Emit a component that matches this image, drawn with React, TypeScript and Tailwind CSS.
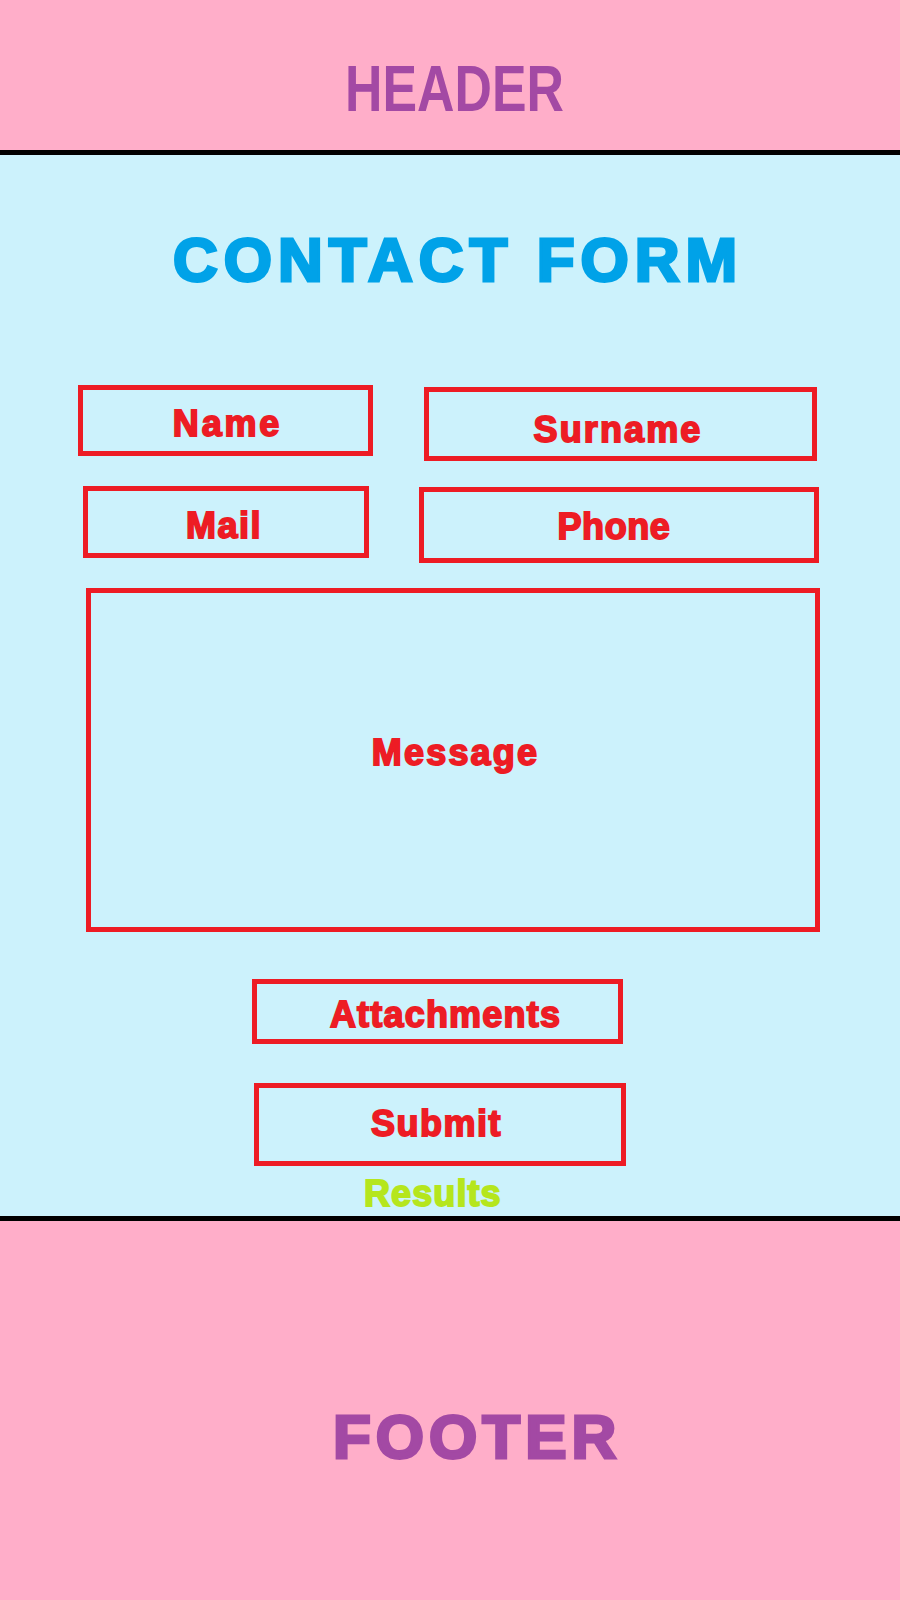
const boxBase =
  'flex items-center justify-center border-[5px] border-[#ed1c24] shrink-0'
const labelBase =
  "font-['Liberation_Sans',Arial,sans-serif] font-bold text-[36px] leading-none text-[#ed1c24] [-webkit-text-stroke:1.8px_#ed1c24] whitespace-nowrap"

function Field({
  label,
  boxClass,
  textClass,
}: {
  label: string
  boxClass: string
  textClass: string
}) {
  return (
    <div className={`${boxBase} ${boxClass}`}>
      <span className={`${labelBase} ${textClass}`}>{label}</span>
    </div>
  )
}

export default function App() {
  return (
    <div className="w-[900px] min-h-[1600px] flex flex-col font-['Liberation_Sans',Arial,sans-serif]">
      {/* header */}
      <header className="h-[155px] bg-[#ffaec9] border-b-[5px] border-black pt-[57px] pl-[345px]">
        <span className="inline-block origin-left scale-x-[0.81] text-[64px] leading-none font-bold text-[#a349a4]">
          HEADER
        </span>
      </header>

      {/* form */}
      <main className="h-[1066px] bg-[#ccf2fc] border-b-[5px] border-black pt-[74px] flex flex-col">
        <h1 className="pl-[173px] text-[62px] leading-none font-bold tracking-[6px] text-[#00a2e8] [-webkit-text-stroke:3px_#00a2e8] whitespace-nowrap">
          CONTACT FORM
        </h1>

        <div className="flex items-start mt-[94px]">
          <Field
            label="Name"
            boxClass="ml-[78px] w-[295px] h-[71px] pt-[6px] pl-[4px]"
            textClass="tracking-[2.8px]"
          />
          <Field
            label="Surname"
            boxClass="ml-[51px] mt-[2px] w-[393px] h-[74px] pt-[11px] pr-[5px]"
            textClass="tracking-[2.1px]"
          />
        </div>

        <div className="flex items-start mt-[25px]">
          <Field
            label="Mail"
            boxClass="ml-[83px] w-[286px] h-[72px] pt-[7px] pr-[4px]"
            textClass="tracking-[1.5px]"
          />
          <Field
            label="Phone"
            boxClass="ml-[50px] mt-[1px] w-[400px] h-[76px] pt-[4px] pr-[10px]"
            textClass="tracking-[0.6px]"
          />
        </div>

        <Field
          label="Message"
          boxClass="mt-[25px] ml-[86px] w-[734px] h-[344px] pb-[14px] pl-[5px]"
          textClass="tracking-[2.2px]"
        />

        <Field
          label="Attachments"
          boxClass="mt-[47px] ml-[252px] w-[371px] h-[65px] pt-[7px] pl-[16px]"
          textClass="tracking-[1.2px]"
        />

        <Field
          label="Submit"
          boxClass="mt-[39px] ml-[254px] w-[372px] h-[83px] pb-[2px] pr-[7px]"
          textClass="tracking-[1.5px]"
        />

        <p className="mt-[10px] ml-[364px] text-[36px] leading-none font-bold tracking-[1.1px] text-[#b5e61d] [-webkit-text-stroke:1.8px_#b5e61d]">
          Results
        </p>
      </main>

      {/* footer */}
      <footer className="h-[379px] bg-[#ffaec9] pt-[185px] pl-[333px]">
        <span className="text-[62px] leading-none font-bold tracking-[5px] text-[#a349a4] [-webkit-text-stroke:3px_#a349a4] whitespace-nowrap">
          FOOTER
        </span>
      </footer>
    </div>
  )
}
